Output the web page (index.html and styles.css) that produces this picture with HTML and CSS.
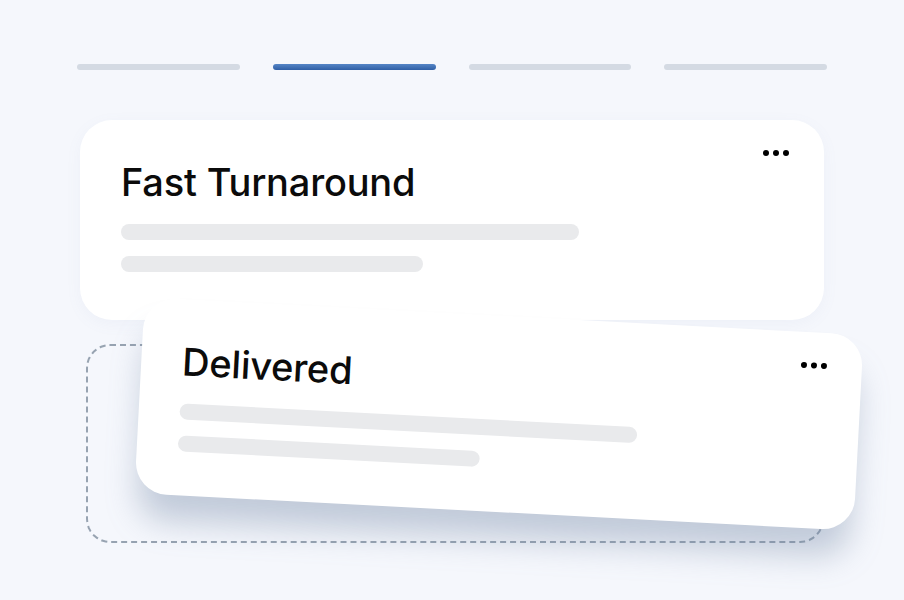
FILE: index.html
```html
<!DOCTYPE html>
<html lang="en">
<head>
  <meta charset="UTF-8">
  <meta name="viewport" content="width=device-width, initial-scale=1.0">
  <title>Board</title>
  <link rel="stylesheet" href="styles.css">
</head>
<body>

  <div class="stage">
    <!-- Etapas -->
    <div class="steps">
      <span class="step"></span>
      <span class="step active"></span>
      <span class="step"></span>
      <span class="step"></span>
    </div>

    <div class="card">
      <div class="dots"><i></i><i></i><i></i></div>
      <h2 class="card-title">Fast Turnaround</h2>
      <div class="line long"></div>
      <div class="line short"></div>
    </div>

    <div class="drop-zone"></div>

    <!-- Cartão sendo arrastado -->
    <div class="card dragging">
      <div class="dots"><i></i><i></i><i></i></div>
      <h2 class="card-title">Delivered</h2>
      <div class="line long"></div>
      <div class="line short"></div>
    </div>
  </div>

</body>
</html>
```

FILE: styles.css
```css
/* Estilos gerais */
html, body {
  height: 100%;
}

body {
  margin: 0;
  background-color: #f5f7fc;
  font-family: Inter, "Open Sans", sans-serif;
  overflow: hidden;
}

.stage {
  position: relative;
  width: 750px;
  margin-left: 77px;
  padding-top: 64px;
}

/* Etapas */
.steps {
  display: flex;
  gap: 33px;
}

.step {
  flex: 1;
  height: 6px;
  border-radius: 3px;
  background-color: #d4dae3;
}

.step.active {
  background: linear-gradient(#5585c6, #2f5fa6);
}

/* Cartões */
.card {
  position: relative;
  box-sizing: border-box;
  height: 200px;
  margin: 50px 3px 0;
  padding: 40px 41px 0;
  background-color: #fff;
  border-radius: 32px;
  box-shadow: 0 4px 16px rgba(120, 140, 180, 0.06);
}

.card-title {
  margin: 0 0 20px;
  font-size: 38px;
  font-weight: 500;
  line-height: 44px;
  color: #0b0b0b;
  letter-spacing: -0.2px;
}

.line {
  height: 16px;
  border-radius: 8px;
  background-color: #e9eaec;
}

.line.long {
  width: 458px;
  margin-bottom: 16px;
}

.line.short {
  width: 302px;
}

.dots {
  position: absolute;
  top: 30px;
  right: 35px;
  display: flex;
  gap: 4px;
}

.dots i {
  width: 6px;
  height: 6px;
  border-radius: 50%;
  background-color: #000;
}

/* Área de soltar */
.drop-zone {
  box-sizing: border-box;
  height: 199px;
  margin: 24px 3px 0 9px;
  border: 2px dashed #97a3b1;
  border-radius: 24px;
}

.card.dragging {
  position: absolute;
  top: 316px;
  left: 62px;
  width: 720px;
  height: 196px;
  margin: 0;
  transform: rotate(3deg);
  box-shadow: 0 30px 32px -4px rgba(115, 135, 165, 0.4);
}
```
